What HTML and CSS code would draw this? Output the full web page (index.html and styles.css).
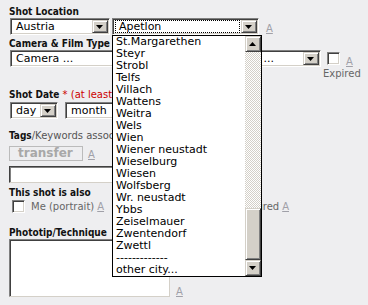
FILE: index.html
```html
<!DOCTYPE html>
<html lang="de">
<head>
  <meta charset="UTF-8">
  <meta name="viewport" content="width=device-width, initial-scale=1.0">
  <title>Shot details</title>
  <link rel="stylesheet" href="styles.css">
</head>
<body>
  <div class="form">
    <div class="label first">Shot Location</div>
    <div class="row">
      <div class="sel sel-country">
        <span class="sel-text">Austria</span>
        <span class="sel-btn"></span>
      </div>
      <div class="city-wrap">
        <div class="sel sel-city">
          <span class="sel-text"><span class="focus">Apetlon</span></span>
          <span class="sel-btn"></span>
        </div>
        <div class="dropdown">
          <ul class="options">
            <li>St.Margarethen</li>
            <li>Steyr</li>
            <li>Strobl</li>
            <li>Telfs</li>
            <li>Villach</li>
            <li>Wattens</li>
            <li>Weitra</li>
            <li>Wels</li>
            <li>Wien</li>
            <li>Wiener neustadt</li>
            <li>Wieselburg</li>
            <li>Wiesen</li>
            <li>Wolfsberg</li>
            <li>Wr. neustadt</li>
            <li>Ybbs</li>
            <li>Zeiselmauer</li>
            <li>Zwentendorf</li>
            <li>Zwettl</li>
            <li>-------------</li>
            <li>other city...</li>
          </ul>
          <div class="scrollbar">
            <span class="sb-btn sb-up"></span>
            <span class="sb-track"></span>
            <span class="sb-thumb"></span>
            <span class="sb-btn sb-down"></span>
          </div>
        </div>
      </div>
      <span class="tip tip-city">A</span>
    </div>

    <div class="label">Camera &amp; Film Type</div>
    <div class="row">
      <div class="sel sel-camera">
        <span class="sel-text">Camera ...</span>
        <span class="sel-more">...</span>
        <span class="sel-btn"></span>
      </div>
      <div class="expired">
        <div class="expired-top">
          <span class="check"></span>
          <span class="tip">A</span>
        </div>
        <div class="expired-text">Expired</div>
      </div>
    </div>

    <div class="label date-label">Shot Date <span class="req">* (at least the year)</span></div>
    <div class="row date-row">
      <div class="sel sel-day">
        <span class="sel-text">day</span>
        <span class="sel-btn"></span>
      </div>
      <div class="sel sel-month">
        <span class="sel-text">month</span>
        <span class="sel-btn"></span>
      </div>
    </div>

    <div class="label tags-label">Tags<span class="sub">/Keywords associated with this shot</span></div>
    <div class="row tags-row">
      <div class="tag-box">transfer</div>
      <span class="tip">A</span>
    </div>
    <div class="text-input"></div>

    <div class="label also-label">This shot is also</div>
    <div class="also-row">
      <span class="check"></span>
      <span class="also-text">Me (portrait)</span>
      <span class="tip">A</span>
      <span class="also-right">
        <span class="check"></span>
        <span class="also-text">Featured</span>
        <span class="tip">A</span>
      </span>
    </div>

    <div class="label tip-label">Phototip/Technique</div>
    <div class="row area-row">
      <div class="textarea"></div>
      <span class="tip">A</span>
    </div>
  </div>
</body>
</html>
```

FILE: styles.css
```css
body {
  margin: 0;
  background-color: #eeeef0;
  font-family: "DejaVu Sans", Verdana, sans-serif;
  font-size: 11px;
  color: #000;
}
.form {
  padding: 4px 0 0 9px;
}
.label {
  font-family: "DejaVu Sans Condensed", "DejaVu Sans", sans-serif;
  font-stretch: condensed;
  font-weight: bold;
  font-size: 10px;
  line-height: 13px;
  height: 13px;
  margin-top: 2px;
  color: #111;
  white-space: nowrap;
}
.label.first {
  margin-top: 1px;
}
.row {
  display: flex;
  align-items: flex-start;
}

/* classic windows select */
.sel {
  position: relative;
  display: flex;
  align-items: center;
  box-sizing: border-box;
  height: 17px;
  margin-left: 1px;
  background: #fff;
  border: 1px solid;
  border-color: #808080 #fff #fff #808080;
  box-shadow: inset 1px 1px #404040, inset -1px -1px #d4d0c8;
  padding: 1px;
  white-space: nowrap;
}
.sel-text {
  flex: 1;
  padding-left: 4px;
  line-height: 13px;
  overflow: hidden;
}
.sel-btn {
  position: relative;
  box-sizing: border-box;
  width: 16px;
  height: 13px;
  background: #d4d0c8;
  border: 1px solid;
  border-color: #d4d0c8 #404040 #404040 #d4d0c8;
  box-shadow: inset 1px 1px #fff, inset -1px -1px #808080;
}
.sel-btn::after {
  content: "";
  position: absolute;
  left: 3px;
  top: 4px;
  width: 7px;
  height: 4px;
  background: #000;
  clip-path: polygon(0 0, 100% 0, 50% 100%);
}
.sel-country {
  width: 100px;
}
.city-wrap {
  position: relative;
  margin-left: 2px;
}
.sel-city {
  width: 147px;
  margin-left: 0;
}
.sel-city .sel-text {
  padding-left: 1px;
}
.focus {
  display: block;
  border: 1px dotted #000;
  padding-left: 3px;
  line-height: 11px;
  margin-right: 1px;
}
.sel-camera {
  width: 311px;
}
.sel-more {
  margin-right: 29px;
}
.sel-day {
  width: 48px;
}
.sel-month {
  width: 110px;
  margin-left: 7px;
}

/* open city list */
.dropdown {
  position: absolute;
  top: 17px;
  left: 0;
  z-index: 5;
  display: flex;
  width: 150px;
  box-sizing: border-box;
  border: 1px solid #000;
  background: #fff;
}
.options {
  flex: 1;
  list-style: none;
  margin: 0;
  padding: 0;
}
.options li {
  height: 12px;
  line-height: 12px;
  padding-left: 3px;
  white-space: nowrap;
}
.scrollbar {
  display: flex;
  flex-direction: column;
  width: 16px;
}
.sb-btn, .sb-thumb {
  position: relative;
  box-sizing: border-box;
  background: #d4d0c8;
  border: 1px solid;
  border-color: #d4d0c8 #404040 #404040 #d4d0c8;
  box-shadow: inset 1px 1px #fff, inset -1px -1px #808080;
}
.sb-btn {
  height: 16px;
}
.sb-btn::after {
  content: "";
  position: absolute;
  left: 3px;
  top: 5px;
  width: 7px;
  height: 4px;
  background: #000;
}
.sb-up::after {
  clip-path: polygon(50% 0, 100% 100%, 0 100%);
}
.sb-down::after {
  clip-path: polygon(0 0, 100% 0, 50% 100%);
}
.sb-track {
  flex: 1;
  background: repeating-conic-gradient(#d4d0c8 0 25%, #fff 0 50%) 0 0 / 2px 2px;
}
.sb-thumb {
  height: 52px;
}

.tip {
  font-size: 10px;
  line-height: 11px;
  color: #a0a0a8;
  text-decoration: underline;
  font-family: "DejaVu Sans", sans-serif;
}
.tip-city {
  margin: 5px 0 0 7px;
}

.check {
  display: inline-block;
  flex: none;
  box-sizing: border-box;
  width: 13px;
  height: 13px;
  background: #fff;
  border: 1px solid;
  border-color: #808080 #fff #fff #808080;
  box-shadow: inset 1px 1px #404040, inset -1px -1px #d4d0c8;
}
.expired {
  flex: none;
  margin: 2px 0 0 6px;
  color: #666;
}
.expired-top {
  display: flex;
  align-items: flex-end;
  gap: 6px;
}
.expired-top .tip {
  margin-bottom: -2px;
}
.expired-text {
  font-size: 10px;
  line-height: 12px;
  margin: 3px 0 0 -4px;
  white-space: nowrap;
}

.date-label {
  margin-top: 8px;
}
.req {
  color: #c00;
  font-weight: normal;
  font-family: "DejaVu Sans", sans-serif;
  font-stretch: normal;
}
.date-row {
  margin-top: 1px;
}
.tags-label {
  margin-top: 10px;
}
.sub {
  font-weight: normal;
  font-family: "DejaVu Sans", sans-serif;
  font-stretch: normal;
  color: #555;
}
.tags-row {
  margin-top: 4px;
  align-items: flex-end;
}
.tag-box {
  box-sizing: border-box;
  width: 74px;
  height: 15px;
  border: 1px solid #bbb;
  background: #eeeef0;
  font-weight: bold;
  font-size: 12px;
  line-height: 13px;
  color: #a8a8a8;
  padding-left: 8px;
}
.tags-row .tip {
  margin: 0 0 1px 5px;
}
.text-input {
  box-sizing: border-box;
  width: 220px;
  height: 17px;
  margin-top: 5px;
  background: #fff;
  border: 1px solid;
  border-color: #404040 #d4d0c8 #d4d0c8 #404040;
  box-shadow: inset 1px 1px #808080;
}
.also-label {
  margin-top: 3px;
}
.also-row {
  display: flex;
  align-items: center;
  width: 277px;
  margin: 1px 0 0 3px;
  color: #666;
  font-size: 10px;
}
.also-text {
  margin-left: 6px;
}
.also-row .tip {
  margin-left: 3px;
}
.also-right {
  display: flex;
  align-items: center;
  margin-left: auto;
}
.tip-label {
  margin-top: 13px;
}
.area-row {
  align-items: flex-end;
}
.textarea {
  box-sizing: border-box;
  width: 161px;
  height: 58px;
  background: #fff;
  border: 1px solid;
  border-color: #808080 #d4d0c8 #d4d0c8 #808080;
  box-shadow: inset 1px 1px #404040;
}
.area-row .tip {
  margin: 0 0 0 6px;
}
```
